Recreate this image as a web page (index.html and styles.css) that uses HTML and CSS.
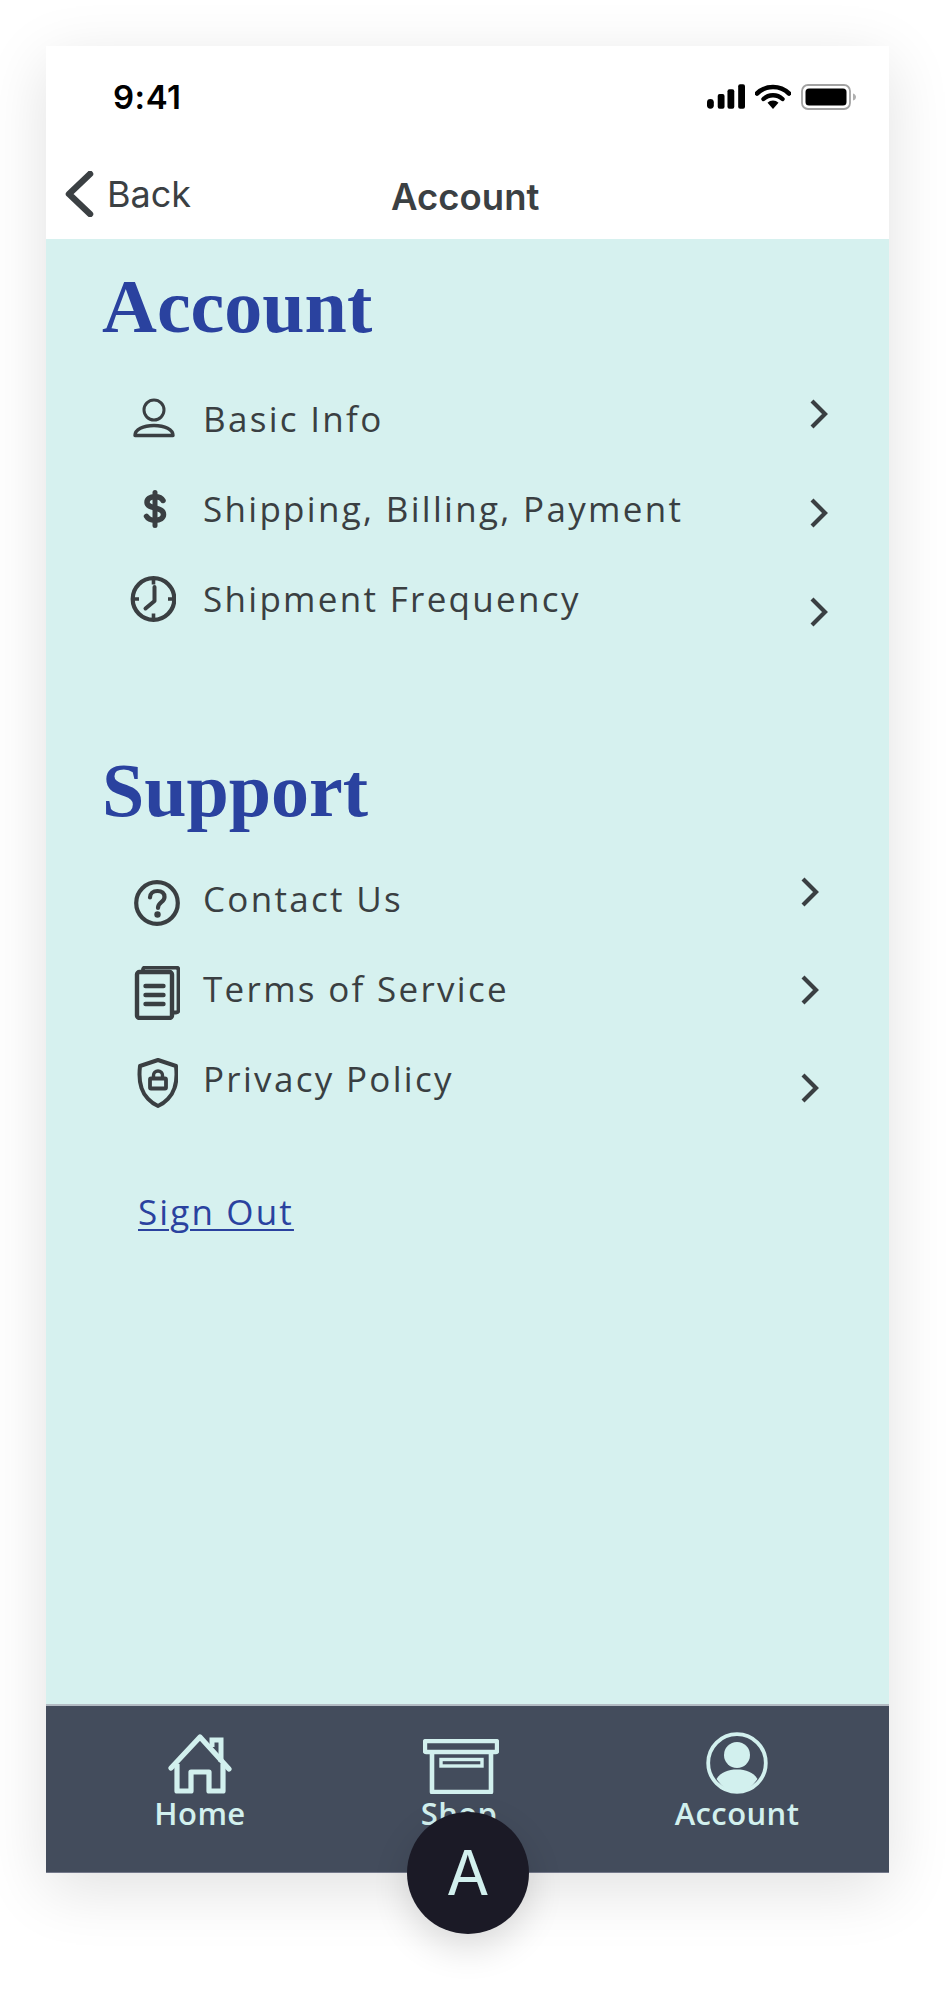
FILE: index.html
```html
<!DOCTYPE html>
<html lang="en">
<head>
<meta charset="utf-8">
<title>Account</title>
<link rel="stylesheet" href="styles.css">
</head>
<body>
<div class="phone">
  <header class="top">
    <div class="status">
      <span class="time">9:41</span>
      <div class="status-icons">
        <svg class="signal" width="38" height="26" viewBox="0 0 39 26"><rect x="0" y="15" width="7" height="10" rx="3.5"/><rect x="11" y="10" width="7" height="15" rx="2"/><rect x="21" y="5" width="7" height="20" rx="2"/><rect x="32" y="0" width="7" height="25" rx="2"/></svg>
        <svg class="wifi" width="36" height="26" viewBox="0 0 36 26"><path d="M18 25l-5.500-6.300a8 8 0 0 1 11 0z"/><path d="M2 9.500a23 23 0 0 1 32 0" fill="none" stroke="#000" stroke-width="4.600" stroke-linecap="round"/><path d="M8.500 15a14 14 0 0 1 19 0" fill="none" stroke="#000" stroke-width="4.400" stroke-linecap="round"/></svg>
        <svg class="battery" width="56" height="26" viewBox="0 0 56 26"><rect x="1" y="1" width="48" height="24" rx="6" fill="none" stroke="#a2a2a2" stroke-width="1.800"/><rect x="4.500" y="4.500" width="41" height="17" rx="3.500" fill="#000"/><path d="M52 9.500c2 .5 3 2 3 3.500s-1 3-3 3.500z" fill="#b0b0b0"/></svg>
      </div>
    </div>
    <nav class="nav">
      <a class="back">
        <svg width="30" height="46" viewBox="0 0 30 46"><path d="M26 3L5 23l21 20" fill="none" stroke="#3b4043" stroke-width="6.500" stroke-linecap="round" stroke-linejoin="round"/></svg>
        <span>Back</span>
      </a>
      <span class="title">Account</span>
    </nav>
  </header>

  <main class="content">
    <section class="group group-account">
      <h2 class="heading">Account</h2>
      <div class="rows">
        <ul class="list">
          <li class="item"><span class="icon"><svg width="46" height="46" viewBox="0 0 46 46"><circle cx="24" cy="14" r="10" fill="none" stroke="#3a3f42" stroke-width="3"/><path d="M5 39.500c0-6 8-10 19-10s19 4 19 10z" fill="none" stroke="#3a3f42" stroke-width="3.400" stroke-linejoin="round"/></svg></span>Basic Info</li>
          <li class="item"><span class="icon"><svg width="46" height="46" viewBox="0 0 46 46"><path d="M33 14.500c-1.300-2.500-4-3.800-8-3.800-5 0-8 2.300-8 5.500 0 7.500 16.500 4 16.500 12.300 0 3.400-3.400 5.800-8.500 5.800-4.300 0-7.200-1.600-8.500-4" fill="none" stroke="#3a3f42" stroke-width="5.500" stroke-linecap="round"/><path d="M25 6.500v33" stroke="#3a3f42" stroke-width="5" stroke-linecap="round"/></svg></span>Shipping, Billing, Payment</li>
          <li class="item"><span class="icon"><svg width="46" height="46" viewBox="0 0 46 46"><circle cx="23.500" cy="23" r="20.800" fill="none" stroke="#3a3f42" stroke-width="4.200"/><path d="M23.500 3v5.500M23.500 37.500V43M3.500 23H9M38 23h5.500" stroke="#3a3f42" stroke-width="3.600"/><path d="M24.500 11v14l-9 7.500" fill="none" stroke="#3a3f42" stroke-width="4" stroke-linecap="round" stroke-linejoin="round"/></svg></span>Shipment Frequency</li>
        </ul>
        <div class="chevrons">
          <svg width="20" height="30" viewBox="0 0 20 30"><path d="M3 2l13 13L3 28" fill="none" stroke="#3a3f42" stroke-width="4.200"/></svg>
          <svg width="20" height="30" viewBox="0 0 20 30"><path d="M3 2l13 13L3 28" fill="none" stroke="#3a3f42" stroke-width="4.200"/></svg>
          <svg width="20" height="30" viewBox="0 0 20 30"><path d="M3 2l13 13L3 28" fill="none" stroke="#3a3f42" stroke-width="4.200"/></svg>
        </div>
      </div>
    </section>

    <section class="group group-support">
      <h2 class="heading">Support</h2>
      <div class="rows">
        <ul class="list">
          <li class="item"><span class="icon icon-shift"><svg width="46" height="46" viewBox="0 0 46 46"><circle cx="23" cy="23" r="20.800" fill="none" stroke="#3a3f42" stroke-width="4.200"/><path d="M16 17.500c0-4 3-6.500 7.500-6.500s7 2.500 7 6c0 5.500-6.500 5-6.500 11" fill="none" stroke="#3a3f42" stroke-width="4.200" stroke-linecap="round"/><circle cx="23.500" cy="34.500" r="3.200" fill="#3a3f42"/></svg></span>Contact Us</li>
          <li class="item"><span class="icon icon-shift"><svg width="46" height="54" viewBox="0 0 46 54"><path d="M9 5V3.500c0-1 1-2 2-2h31c1.500 0 2.500 1 2.500 2.500v40c0 1.500-1 2.500-2.500 2.500H39" fill="none" stroke="#3a3f42" stroke-width="3.800"/><rect x="3" y="6" width="35" height="46" rx="2.500" fill="none" stroke="#3a3f42" stroke-width="4.400"/><path d="M11.500 20h18M11.500 29h18M11.500 38h18" stroke="#3a3f42" stroke-width="4.400" stroke-linecap="round"/></svg></span>Terms of Service</li>
          <li class="item"><span class="icon icon-shift"><svg width="44" height="50" viewBox="0 0 44 50"><path d="M24 2l18 6c1 9 1 15-1.500 22C38 38 31 45 24 48 17 45 10 38 7.500 30 5 23 5 17 6 8z" fill="none" stroke="#3a3f42" stroke-width="4" stroke-linejoin="round"/><rect x="16" y="20.500" width="16" height="10" rx="1" fill="none" stroke="#3a3f42" stroke-width="3.800"/><path d="M19.500 20v-2.500a4.500 4.500 0 0 1 9 0V20" fill="none" stroke="#3a3f42" stroke-width="3.400"/></svg></span>Privacy Policy</li>
        </ul>
        <div class="chevrons chevrons-support">
          <svg width="20" height="30" viewBox="0 0 20 30"><path d="M3 2l13 13L3 28" fill="none" stroke="#3a3f42" stroke-width="4.200"/></svg>
          <svg width="20" height="30" viewBox="0 0 20 30"><path d="M3 2l13 13L3 28" fill="none" stroke="#3a3f42" stroke-width="4.200"/></svg>
          <svg width="20" height="30" viewBox="0 0 20 30"><path d="M3 2l13 13L3 28" fill="none" stroke="#3a3f42" stroke-width="4.200"/></svg>
        </div>
      </div>
      <a class="signout">Sign Out</a>
    </section>
  </main>

  <footer class="tabs">
    <div class="tab">
      <svg width="64" height="60" viewBox="0 0 64 60"><path d="M3 34L32 3l29 32" fill="none" stroke="#d2f0ee" stroke-width="5.200" stroke-linecap="round" stroke-linejoin="round"/><path d="M44 13V6h9v22" fill="none" stroke="#d2f0ee" stroke-width="5"/><path d="M9 30v27h14V38h18v19h14V30" fill="none" stroke="#d2f0ee" stroke-width="5.200" stroke-linejoin="round"/></svg>
      <span>Home</span>
    </div>
    <div class="tab">
      <svg class="tab-box" width="76" height="55" viewBox="0 0 76 55"><rect x="2" y="2" width="72" height="11" rx="1" fill="none" stroke="#d2f0ee" stroke-width="4.400"/><path d="M9 13v40h59V13" fill="none" stroke="#d2f0ee" stroke-width="4.600" stroke-linejoin="round"/><rect x="18" y="20.500" width="41" height="6.500" fill="none" stroke="#d2f0ee" stroke-width="3.400"/></svg>
      <span>Shop</span>
    </div>
    <div class="tab">
      <svg width="62" height="62" viewBox="0 0 62 62"><circle cx="31" cy="31" r="28.800" fill="none" stroke="#d2f0ee" stroke-width="3.800"/><circle cx="31" cy="23" r="13" fill="#d2f0ee"/><path d="M10.500 47C15 40 22 37.500 31 37.500S47 40 51.500 47C46 55 39 60 31 60S16 55 10.500 47z" fill="#d2f0ee"/></svg>
      <span>Account</span>
    </div>
  </footer>

  <div class="fab">A</div>
</div>
</body>
</html>
```
FILE: styles.css
```css
* { box-sizing: border-box; }
html, body { margin: 0; padding: 0; background: #fff; }
body { width: 949px; height: 1994px; padding: 46px 0 0 46px; overflow: hidden; }

.phone {
  position: relative;
  width: 843px;
  height: 1827px;
  display: flex;
  flex-direction: column;
  background: #d6f1ef;
  box-shadow: 0 16px 60px rgba(0, 0, 0, 0.12);
}

.top { height: 193px; background: #fff; flex: none; }
.status { height: 124px; display: flex; justify-content: space-between; align-items: flex-start; padding: 33px 32px 0 67px; }
.time { font: 600 33px/36px Inter, sans-serif; color: #000; letter-spacing: 0.5px; }
.status-icons { display: flex; align-items: flex-start; gap: 10px; padding-top: 5px; }
.status-icons svg { display: block; fill: #000; }
.nav { height: 69px; display: flex; align-items: flex-start; padding: 0 0 0 18px; }
.back { display: flex; align-items: center; gap: 13px; padding-top: 1px; font: 400 36px/46px Inter, sans-serif; color: #3b4043; }
.back svg { display: block; }
.title { margin-left: 200px; padding-top: 4px; font: 600 36.500px/46px Inter, sans-serif; color: #3b4043; }

.content { flex: 1; padding: 31px 0 0 56px; min-height: 0; }
.heading { margin: 0; font: 700 76px/72px "Liberation Serif", serif; color: #2a429f; }
.group-support { margin-top: 110px; }

.rows { display: flex; justify-content: space-between; }
.list { list-style: none; margin: 0; padding: 32px 0 0 28px; }
.group-support .list { padding-top: 28px; }
.item { display: flex; align-items: center; height: 90px; font: 400 35px/46px "Open Sans", sans-serif; letter-spacing: 2.300px; color: #3a3f42; }
.icon { width: 73px; display: flex; flex: none; }
.icon svg { display: block; }
.icon-shift { padding-left: 4px; margin-top: 8px; width: 73px; }

.chevrons { display: flex; flex-direction: column; gap: 69px; padding: 57px 60px 0 0; }
.chevrons svg { display: block; }
.chevrons-support { gap: 68px; padding-right: 69px; padding-top: 51px; }

.signout { display: block; margin: 65px 0 0 28px; padding-left: 8px; font: 400 35px/46px "Open Sans", sans-serif; letter-spacing: 2.150px; color: #2a429f; }
.signout { text-decoration: underline; text-decoration-thickness: 2px; text-underline-offset: 4px; }

.tabs {
  flex: none;
  height: 169px;
  background: #434c5c;
  border-top: 2px solid #b3bbc3;
  border-bottom: 1px solid #73788a;
  display: grid;
  grid-template-columns: 259px 278px 120px;
  justify-items: start;
  padding: 26px 0 0 94px;
}
.tab { width: 120px; display: flex; flex-direction: column; align-items: center; font: 600 31px/38px "Open Sans", sans-serif; letter-spacing: 0.4px; color: #d2f0ee; height: 100px; justify-content: flex-end; white-space: nowrap; }
.tab svg { display: block; flex: none; }
.tab-box { margin-left: 3px; }

.fab {
  position: absolute;
  left: 361px;
  bottom: -61px;
  width: 122px;
  height: 122px;
  border-radius: 50%;
  background: #1b1a26;
  color: #d2f0ee;
  font: 400 62px/122px Inter, sans-serif;
  text-align: center;
  box-shadow: 0 14px 36px rgba(0, 0, 0, 0.14);
}
```
